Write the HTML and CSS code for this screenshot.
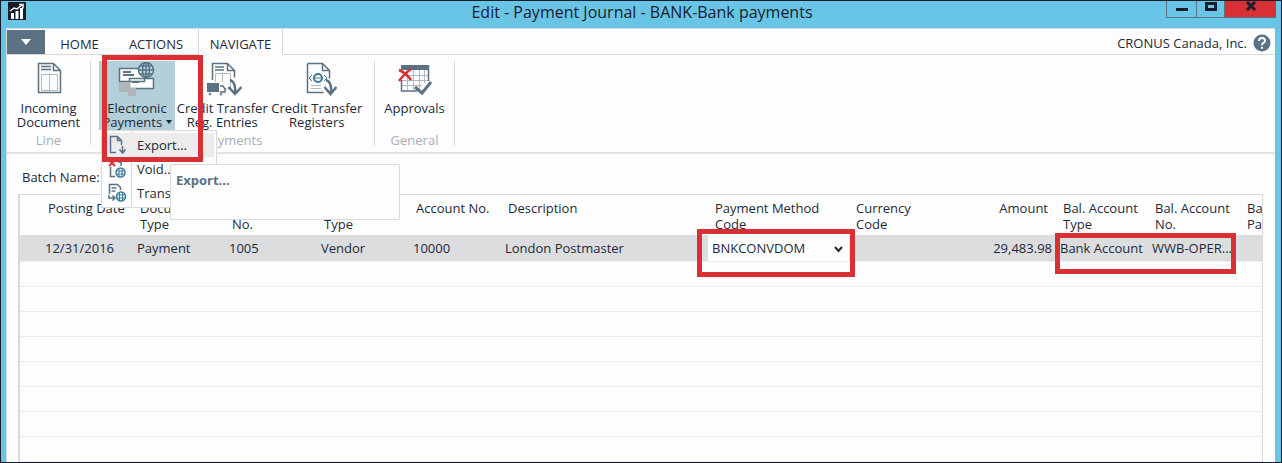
FILE: index.html
```
<!DOCTYPE html>
<html lang="en">
<head>
<meta charset="utf-8">
<title>Edit - Payment Journal</title>
<link rel="stylesheet" href="styles.css">
</head>
<body>
<div class="window">
  <header class="titlebar">
    <svg class="app-icon" width="18" height="18" viewBox="0 0 18 18">
      <rect width="18" height="18" fill="#171c2b"/>
      <path d="M3 11h3v6H3zM7.500 9h3v8h-3zM12 6h3v11h-3z" fill="#fff"/>
      <path d="M2 9l4-3 3 1 5-4M11 2.500h4v4" fill="none" stroke="#fff" stroke-width="1.500"/>
    </svg>
    <h1 class="title">Edit - Payment Journal - BANK-Bank payments</h1>
    <div class="controls">
      <button class="control minimize" aria-label="Minimize"><svg width="12" height="14"><path d="M0 8.500h12" stroke="#171c2b" stroke-width="3"/></svg></button>
      <button class="control maximize" aria-label="Maximize"><svg width="12" height="14"><rect x="1.500" y="2.500" width="9" height="6" fill="none" stroke="#171c2b" stroke-width="3"/></svg></button>
      <button class="control close" aria-label="Close"><svg width="12" height="14"><path d="M2 1l8 8M10 1l-8 8" stroke="#171c2b" stroke-width="3"/></svg></button>
    </div>
  </header>
  <div class="client">
    <nav class="tabs">
      <button class="file-tab" aria-label="Application menu"><svg width="10" height="6"><path d="M0 0h10L5 6z" fill="#fff"/></svg></button>
      <button class="tab tab-home">HOME</button>
      <button class="tab tab-actions">ACTIONS</button>
      <button class="tab tab-active">NAVIGATE</button>
      <div class="company"><span>CRONUS Canada, Inc.</span>
        <button class="help" aria-label="Help"><svg width="18" height="18" viewBox="0 0 18 18"><circle cx="9" cy="9" r="8.500" fill="#5b7284"/><path d="M6 7q0-3 3-3t3 2.700Q12 8 10.300 9 9 9.700 9 11.300M9 12.800v2" fill="none" stroke="#fff" stroke-width="2"/></svg></button>
      </div>
    </nav>
    <section class="ribbon">
      <div class="group group-line">
        <div class="group-items">
          <button class="action">
            <svg width="40" height="34" viewBox="0 0 40 34" fill="none" stroke="#5b7284"><path d="M9.500 1.500h15l7 7v22h-22zM24.500 1.500v7h7" stroke-width="1.500"/><path d="M12 4.500h10M12 7.500h10" stroke-width="1.500"/><path d="M12.500 12.500h16v16h-16zM20.500 12.500v16" stroke="#b4b9bf"/></svg>
            <span>Incoming<br>Document</span>
          </button>
        </div>
        <div class="group-name">Line</div>
      </div>
      <div class="group group-payments">
        <div class="group-items">
          <button class="action action-open">
            <svg width="40" height="34" viewBox="0 0 40 34"><g fill="#fdfdfd" stroke="#5b7284" stroke-width="1.500"><path d="M2.500 6.500h25v13h-25zM12.500 16.500h24v10h-24z"/><circle cx="29" cy="8" r="7.500" fill="#b4d9e7"/><ellipse cx="29" cy="8" rx="3.500" ry="7.500" fill="none"/><path d="M21.500 8h15M23 4h12M23 12h12M29 .5v15" fill="none"/><path d="M6 10h8M6 13h11M15 20h7" stroke-width="2" fill="none"/></g><path d="M2 20h11v6h6v8h-8v-4H2z" fill="#b0b4bb"/></svg>
            <span>Electronic<br>Payments <svg class="arrow" width="6" height="4"><path d="M0 0h6L3 4z" fill="#1d2a38"/></svg></span>
          </button>
          <button class="action">
            <svg width="40" height="34" viewBox="0 0 40 34" fill="none" stroke="#5b7284"><path d="M10.500 18V1.500h15l7 7v7M25.500 1.500v7h7M13 5h9M13 8h9" stroke-width="1.500"/><path d="M13.500 20v-8.500h15V28M20.500 11v9M23 27h7" stroke="#b4b9bf"/><path d="M5 21h12v9H5z" fill="#5b7284" stroke="none"/><path d="M18 24h3l2 3v3h-5" stroke-width="1.500"/><circle cx="8" cy="32" r="1" /><circle cx="19" cy="32" r="1"/><path d="M28 18q6 2 5 12M26.500 25l6.500 7 6.500-7" stroke-width="2.500"/></svg>
            <span>Credit Transfer<br>Reg. Entries</span>
          </button>
          <button class="action">
            <svg width="40" height="34" viewBox="0 0 40 34" fill="none" stroke="#5b7284"><path d="M10.500 1.500h15l7 7v8M25.500 1.500v7h7M10.500 1.500v29h16" stroke-width="1.500"/><circle cx="21" cy="16" r="4" stroke="#397b9d" stroke-width="2"/><path d="M17 16h8M15 13l-3 3 3 3M27 13l3 3-3 3"/><path d="M14 23.500h10M14 26.500h10" stroke="#b4b9bf"/><path d="M29 18q6 2 5 12M27.500 25l6 7 6-7" stroke-width="2.500"/></svg>
            <span>Credit Transfer<br>Registers</span>
          </button>
        </div>
        <div class="group-name">Payments</div>
        <div class="menu">
          <button class="menu-item menu-current"><svg width="20" height="20" viewBox="0 0 20 20" fill="none" stroke="#5b7284" stroke-width="1.500"><path d="M9 17.500H3.500v-16h7l4 4V10M10.500 1.500v4h4M15.500 11v6M12.500 14.500l3 3.500 3-3.500"/></svg><span>Export...</span></button>
          <button class="menu-item"><svg width="20" height="20" viewBox="0 0 20 20" fill="none" stroke="#5b7284" stroke-width="1.500"><path d="M3.500 8v9.500H8M11 3h3v4"/><path d="M2 1l6 6M8 1L2 7" stroke="#d93035" stroke-width="2"/><circle cx="13.500" cy="13.500" r="4.500" stroke="#397b9d"/><path d="M9 12h9M9 15h9M12 9v9M15 9v9" stroke="#397b9d" stroke-width="1"/></svg><span>Void...</span></button>
          <button class="menu-item"><svg width="20" height="20" viewBox="0 0 20 20" fill="none" stroke="#5b7284" stroke-width="1.500"><path d="M2.500 11V1.500h8l3 3V7M4.500 5h5M4.500 8h4M2 12v3h6M5.500 12.500L8 15l-2.500 2.500"/><circle cx="14" cy="13.500" r="4.500" stroke="#397b9d"/><path d="M9 12h9M9 15h9M12.500 9v9M15.500 9v9" stroke="#397b9d" stroke-width="1"/></svg><span>Transmit...</span></button>
        </div>
        <div class="tooltip">Export...</div>
        <div class="mark mark-menu"></div>
      </div>
      <div class="group group-general">
        <div class="group-items">
          <button class="action">
            <svg width="40" height="34" viewBox="0 0 40 34" fill="none"><path d="M6 3h28v5H6z" fill="#5b7284"/><path d="M7 13.500h27M7 18.500h27M7 23.500h20M12.500 8v20M18.500 8v20M24.500 8v20M29.500 8v13" stroke="#b4b9bf"/><path d="M6.500 18v11H22M33.500 3v16" stroke="#5b7284" stroke-width="1.500"/><path d="M20 25l7 6 9-11" stroke="#5b7284" stroke-width="3"/><path d="M4 8q7 3 12 10M16 7Q10 11 4 19" stroke="#d93035" stroke-width="2.500"/></svg>
            <span>Approvals</span>
          </button>
        </div>
        <div class="group-name">General</div>
      </div>
    </section>
    <div class="batch">Batch Name:</div>
    <main class="grid">
      <table>
        <colgroup><col class="c-date"><col class="c-std"><col class="c-std"><col class="c-std"><col class="c-std"><col><col class="c-method"><col class="c-std"><col class="c-amount"><col class="c-std"><col class="c-std"><col class="c-last"></colgroup>
        <thead><tr><th>Posting Date</th><th>Document Type</th><th>Document No.</th><th>Account Type</th><th>Account No.</th><th>Description</th><th>Payment Method Code</th><th>Currency Code</th><th class="num">Amount</th><th>Bal. Account Type</th><th>Bal. Account No.</th><th class="cut">Ba<br>Pa</th></tr></thead>
        <tbody>
          <tr class="selected"><td>12/31/2016</td><td>Payment</td><td>1005</td><td>Vendor</td><td>10000</td><td>London Postmaster</td>
            <td class="edit"><select aria-label="Payment Method Code"><option>BNKCONVDOM</option></select><svg class="chevron" width="9" height="7"><path d="M1 1l3.500 4L8 1" fill="none" stroke="#1d2a38" stroke-width="2"/></svg><div class="mark mark-method"></div></td>
            <td></td><td class="num">29,483.98</td><td class="anchor">Bank Account<div class="mark mark-account"></div></td><td>WWB-OPER...</td><td></td></tr>
          <tr><td colspan="12"></td></tr><tr><td colspan="12"></td></tr><tr><td colspan="12"></td></tr><tr><td colspan="12"></td></tr><tr><td colspan="12"></td></tr><tr><td colspan="12"></td></tr><tr><td colspan="12"></td></tr><tr><td colspan="12"></td></tr>
        </tbody>
      </table>
    </main>
  </div>
</div>
</body>
</html>
```
FILE: styles.css
```
* { box-sizing: border-box; }
body { margin: 0; color: #1d2a38; font: 13px/14px "Open Sans", "Noto Sans", sans-serif; }
button { margin: 0; padding: 0; border: 0; background: none; color: inherit; font: inherit; }
svg { display: block; flex: none; }

.window { display: flex; flex-direction: column; height: 100vh; border: 1px solid #171c2b; background: #69c5e6; overflow: hidden; }
.titlebar { display: grid; grid-template-columns: 1fr auto 1fr; height: 27px; flex: none; padding: 0 5px 0 7px; }
.app-icon { margin-top: 1px; }
.title { margin: 0; color: #171c2b; font-size: 16px; font-weight: 400; line-height: 22px; }
.controls { display: flex; justify-self: end; height: 17px; }
.control { display: flex; justify-content: center; width: 30px; border: solid #5b7284; border-width: 0 0 1px 1px; }
.maximize { width: 28px; }
.close { width: 52px; background: #d93035; }

.client { display: flex; flex: 1; flex-direction: column; min-height: 0; margin: 0 6px 0 5px; border-left: 1px solid #d9dadd; background: #fdfdfd; }
.tabs { display: flex; height: 27px; flex: none; border-top: 1px solid #d9dadd; border-bottom: 1px solid #d9dadd; }
.file-tab { display: flex; align-items: center; justify-content: center; width: 38px; margin-top: 1px; background: #5b7284; }
.tab { height: 26px; padding-top: 3px; }
.tab-home { width: 69px; }
.tab-actions { width: 84px; }
.tab-active { width: 85px; border: 1px solid #d9dadd; border-width: 0 1px; background: #fdfdfd; }
.company { display: flex; align-items: center; gap: 6px; margin-left: auto; padding: 2px 4px 0 0; }

.ribbon { display: flex; height: 99px; flex: none; padding-top: 6px; border-bottom: 2px solid #e3e4e6; }
.group { position: relative; display: flex; flex-direction: column; height: 84px; border-right: 1px solid #d9dadd; }
.group-line { width: 84px; }
.group-payments { width: 284px; }
.group-payments .group-items { padding: 0 10px 0 8px; }
.group-general { width: 80px; }
.group-items { display: flex; flex: 1; }
.action { display: flex; flex: 1; flex-direction: column; align-items: center; gap: 5px; height: 69px; padding-top: 1px; white-space: nowrap; }
.action-open { flex: 0 0 76px; background: #b3cfda; }
.arrow { display: inline-block; vertical-align: 3px; }
.group-name { padding-top: 3px; color: #a9adb5; text-align: center; }
.menu { position: absolute; z-index: 1; top: 69px; left: 10px; width: 116px; padding: 2px 2px 2px; border: 1px solid #d9dadd; background: linear-gradient(90deg, #fdfdfd 29px, #d9dadd 29px 30px, #fdfdfd 30px); }
.menu-item { display: flex; align-items: center; gap: 10px; width: 100%; height: 24px; padding-left: 3px; }
.menu-current { background: #ececed; }
.tooltip { position: absolute; z-index: 2; top: 103px; left: 79px; width: 230px; height: 56px; padding: 8px 5px; border: 1px solid #d9dadd; border-radius: 2px; background: #fdfdfd; color: #5b7284; font-weight: 700; }
.mark { position: absolute; z-index: 3; border: 5px solid #d93035; pointer-events: none; }
.mark-menu { top: -6px; left: 11px; width: 101px; height: 107px; }

.batch { height: 40px; flex: none; padding: 16px 15px; }
.grid { flex: 1; min-height: 0; margin: 0 12px 0 11px; border: solid #d9dadd; border-width: 1px 1px 0 2px; overflow: hidden; }
table { width: 100%; border-collapse: collapse; table-layout: fixed; }
.c-std { width: 92px; }
.c-date { width: 113px; }
.c-method { width: 141px; }
.c-amount { width: 115px; }
.c-last { width: 22px; }
th { height: 40px; padding: 5px 7px 0; font-weight: 400; line-height: 16px; text-align: left; vertical-align: top; }
th:first-child { padding-left: 28px; white-space: nowrap; }
td { height: 25px; padding: 0 0 0 4px; border-bottom: 1px solid #ececed; white-space: nowrap; }
td:first-child { padding-left: 25px; }
.selected td { height: 26px; background: #dcdddf; }
.num { text-align: right; }
td.num { padding-right: 4px; }
th.num { padding-right: 8px; }
th.cut { padding-right: 0; }
.anchor, .selected .edit { position: relative; }
.selected .edit { background: #fdfdfd; padding: 0; }
select { width: 100%; height: 24px; padding: 0 4px; border: 0; appearance: none; background: #fdfdfd; color: inherit; font: inherit; }
.chevron { position: absolute; top: 11px; right: 6px; }
.mark-method { top: -6px; left: -11px; width: 158px; height: 48px; }
.mark-account { top: -2px; left: -1px; width: 181px; height: 41px; }
```
